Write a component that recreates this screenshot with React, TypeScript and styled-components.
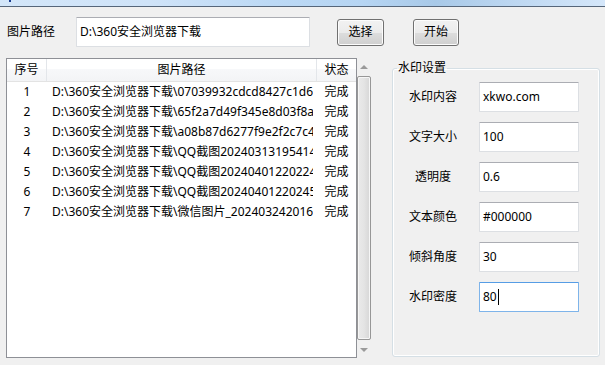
import styled, { createGlobalStyle } from "styled-components";

const rows = [
  { no: 1, path: "D:\\360安全浏览器下载\\07039932cdcd8427c1d6e0b5f3a1c2d4.jpg", state: "完成" },
  { no: 2, path: "D:\\360安全浏览器下载\\65f2a7d49f345e8d03f8a1b2c3d4e5f6.jpg", state: "完成" },
  { no: 3, path: "D:\\360安全浏览器下载\\a08b87d6277f9e2f2c7c4d1e0a9b8c7d.jpg", state: "完成" },
  { no: 4, path: "D:\\360安全浏览器下载\\QQ截图20240313195414.png", state: "完成" },
  { no: 5, path: "D:\\360安全浏览器下载\\QQ截图20240401220224.png", state: "完成" },
  { no: 6, path: "D:\\360安全浏览器下载\\QQ截图20240401220245.png", state: "完成" },
  { no: 7, path: "D:\\360安全浏览器下载\\微信图片_20240324201612.jpg", state: "完成" },
];

const settings = [
  { label: "水印内容", value: "xkwo.com" },
  { label: "文字大小", value: "100" },
  { label: "透明度", value: "0.6" },
  { label: "文本颜色", value: "#000000" },
  { label: "倾斜角度", value: "30" },
  { label: "水印密度", value: "80", focused: true },
];

export default function App() {
  return (
    <>
      <GlobalStyle />
      <Window>
        <TitleStrip>
          <TitleMark />
        </TitleStrip>
        <TopBar>
          <PathLabel>图片路径</PathLabel>
          <Field $width={234} $height={30}>D:\360安全浏览器下载</Field>
          <Button $width={47} style={{ marginLeft: 27 }}>选择</Button>
          <Button $width={46} style={{ marginLeft: 29 }}>开始</Button>
        </TopBar>
        <Main>
          <TableArea>
            <TableFrame>
              <HeaderRow>
                <HeadCell $width={40}>序号</HeadCell>
                <HeadCell $width={270}>图片路径</HeadCell>
                <HeadCell $width={39} $last>状态</HeadCell>
              </HeaderRow>
              {rows.map(r => (
                <Row key={r.no}>
                  <Cell $width={40} $center>{r.no}</Cell>
                  <Cell $width={270}>{r.path}</Cell>
                  <Cell $width={39} $center>{r.state}</Cell>
                </Row>
              ))}
            </TableFrame>
            <ScrollBar>
              <ArrowBox>
                <ArrowUp />
              </ArrowBox>
              <Thumb />
              <ArrowBox>
                <ArrowDown />
              </ArrowBox>
            </ScrollBar>
          </TableArea>
          <GroupBox>
            <Legend>水印设置</Legend>
            <Form>
              {settings.map(s => (
                <FormRow key={s.label}>
                  <FormLabel>{s.label}</FormLabel>
                  <Field $width={100} $height={30} $focused={s.focused}>
                    {s.value}
                    {s.focused && <Caret />}
                  </Field>
                </FormRow>
              ))}
            </Form>
          </GroupBox>
        </Main>
      </Window>
    </>
  );
}

const GlobalStyle = createGlobalStyle`
  html, body {
    margin: 0;
    padding: 0;
    background: #f0f0f0;
  }
  body {
    font-family: "Noto Sans", "Noto Sans CJK SC", sans-serif;
    font-size: 12px;
    color: #000;
  }
`;

const Window = styled.div`
  width: 605px;
  height: 365px;
  background: #f0f0f0;
  display: flex;
  flex-direction: column;
  overflow: hidden;
`;

const TitleStrip = styled.div`
  height: 6px;
  border-bottom: 1px solid #56667a;
  background: linear-gradient(
    90deg,
    #d3e6f9 0%,
    #cfe3f8 25%,
    #bcd9f5 45%,
    #b6d5f3 60%,
    #a8c9e8 72%,
    #bdd7f1 85%,
    #d5e7fa 100%
  );
  position: relative;
`;

const TitleMark = styled.div`
  position: absolute;
  left: 9px;
  top: 0;
  width: 2px;
  height: 2px;
  background: #1c3d8f;
`;

const TopBar = styled.div`
  display: flex;
  align-items: center;
  padding: 10px 0 0 7px;
`;

const PathLabel = styled.div`
  width: 69px;
  line-height: 16px;
`;

const Field = styled.div<{ $width: number; $height: number; $focused?: boolean }>`
  box-sizing: border-box;
  width: ${p => p.$width}px;
  height: ${p => p.$height}px;
  display: flex;
  align-items: center;
  padding: 0 3px;
  background: #fff;
  border: 1px solid ${p => (p.$focused ? "#7eb4ea" : "#dcdfe3")};
  border-top-color: ${p => (p.$focused ? "#569de5" : "#abadb3")};
  border-radius: 1px;
  line-height: 16px;
  white-space: nowrap;
`;

const Caret = styled.span`
  display: inline-block;
  width: 1px;
  height: 16px;
  background: #000;
  margin-left: 1px;
`;

const Button = styled.div<{ $width: number }>`
  box-sizing: border-box;
  width: ${p => p.$width}px;
  height: 27px;
  display: flex;
  align-items: center;
  justify-content: center;
  border: 1px solid #707070;
  border-radius: 3px;
  background: linear-gradient(180deg, #f2f2f2 0%, #ebebeb 50%, #dddddd 51%, #cfcfcf 100%);
  box-shadow: inset 0 0 0 1px #fcfcfc;
  line-height: 16px;
`;

const Main = styled.div`
  display: flex;
  align-items: flex-start;
  padding-left: 6px;
  margin-top: 11px;
`;

const TableArea = styled.div`
  display: flex;
`;

const TableFrame = styled.div`
  box-sizing: border-box;
  width: 351px;
  height: 300px;
  border: 1px solid #8e9096;
  background: #fff;
  overflow: hidden;
`;

const HeaderRow = styled.div`
  display: flex;
  height: 22px;
  border-bottom: 1px solid #e3e3e3;
  background: linear-gradient(180deg, #ffffff 0%, #ffffff 45%, #f7f8fa 46%, #f3f4f6 100%);
`;

const HeadCell = styled.div<{ $width: number; $last?: boolean }>`
  box-sizing: border-box;
  width: ${p => p.$width}px;
  flex: none;
  display: flex;
  align-items: center;
  justify-content: center;
  border-right: ${p => (p.$last ? "none" : "1px solid #e3e6ea")};
  line-height: 16px;
`;

const Row = styled.div`
  display: flex;
  height: 20px;
  align-items: center;
`;

const Cell = styled.div<{ $width: number; $center?: boolean }>`
  box-sizing: border-box;
  width: ${p => (p.$center ? p.$width : p.$width - 4)}px;
  margin-right: ${p => (p.$center ? 0 : 4)}px;
  flex: none;
  padding-left: ${p => (p.$center ? 0 : 5)}px;
  text-align: ${p => (p.$center ? "center" : "left")};
  white-space: nowrap;
  overflow: hidden;
  line-height: 16px;
`;

const ScrollBar = styled.div`
  width: 14px;
  height: 300px;
  display: flex;
  flex-direction: column;
  background: #f0f0f0;
`;

const ArrowBox = styled.div`
  height: 17px;
  display: flex;
  align-items: center;
  justify-content: center;
  flex: none;
`;

const ArrowUp = styled.div`
  width: 0;
  height: 0;
  border-left: 4px solid transparent;
  border-right: 4px solid transparent;
  border-bottom: 4px solid #9a9a9a;
`;

const ArrowDown = styled.div`
  width: 0;
  height: 0;
  border-left: 4px solid transparent;
  border-right: 4px solid transparent;
  border-top: 4px solid #9a9a9a;
`;

const Thumb = styled.div`
  flex: 1;
  box-sizing: border-box;
  margin-top: 1px;
  margin-bottom: 1px;
  border: 1px solid #979797;
  border-radius: 2px;
  background: linear-gradient(90deg, #eaeaea 0%, #e4e4e4 50%, #d6d6d6 100%);
  box-shadow: inset 0 0 0 1px #f6f6f6;
`;

const GroupBox = styled.fieldset`
  box-sizing: border-box;
  width: 208px;
  height: 297px;
  margin: 2px 0 0 21px;
  padding: 0;
  border: 1px solid #d5dfe5;
  border-radius: 3px;
  box-shadow: inset 0 0 0 1px #fff;
  min-width: 0;
`;

const Legend = styled.legend`
  margin-left: 4px;
  padding: 0 1px;
  line-height: 16px;
`;

const Form = styled.div`
  display: flex;
  flex-direction: column;
  gap: 10px;
  padding-top: 6px;
`;

const FormRow = styled.div`
  display: flex;
  align-items: center;
`;

const FormLabel = styled.div`
  width: 80px;
  margin-right: 6px;
  text-align: center;
  line-height: 16px;
`;
